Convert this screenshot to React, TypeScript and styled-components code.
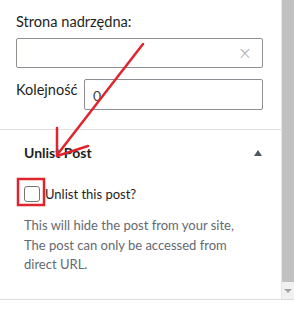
import React from "react";
import styled, { createGlobalStyle } from "styled-components";

const Global = createGlobalStyle`
  html, body { margin: 0; padding: 0; background: #fff; }
  body { font-family: Lato, "Noto Sans", sans-serif; }
`;

const Frame = styled.div`
  position: relative;
  width: 294px;
  height: 299px;
  display: flex;
  border-bottom: 1px solid #dcdcde;
  overflow: hidden;
`;

const Panel = styled.div`
  width: 281px;
  border-right: 1px solid #e6e6e6;
  display: flex;
  flex-direction: column;
  color: #1e1e1e;
  font-size: 14px;
`;

const TopSection = styled.div`
  padding: 12px 18px 19px 16px;
  border-bottom: 1px solid #e0e0e0;
  display: flex;
  flex-direction: column;
`;

const Label = styled.div`
  line-height: 20px;
  margin-bottom: 6px;
  font-size: 14.6px;
`;

const InputBox = styled.div<{ $h?: number; $grow?: boolean }>`
  position: relative;
  height: ${(p) => p.$h ?? 30}px;
  box-sizing: border-box;
  border: 1px solid #8c8f94;
  border-radius: 2px;
  background: #fff;
  display: flex;
  align-items: center;
  padding: 0 8px;
  flex: ${(p) => (p.$grow ? "1" : "none")};
`;

const ClearX = styled.span`
  margin-left: auto;
  color: #a7aaad;
  font-size: 17px;
  line-height: 1;
  margin-right: 2px;
  font-family: "DejaVu Sans", sans-serif;
  font-weight: 300;
`;

const Row = styled.div`
  display: flex;
  align-items: center;
  margin-top: 11px;
`;

const RowLabel = styled.span`
  width: 68px;
  line-height: 20px;
  margin-top: -9px;
  font-size: 14.5px;
`;

const Value = styled.span`
  color: #3c434a;
  font-size: 14px;
  margin-top: 1px;
`;

const Section = styled.div`
  display: flex;
  flex-direction: column;
`;

const Header = styled.div`
  height: 44px;
  padding: 0 19px 0 24px;
  display: flex;
  align-items: center;
  justify-content: space-between;
  font-weight: 700;
  font-size: 14px;
`;

const Caret = styled.span`
  width: 0;
  height: 0;
  border-left: 4px solid transparent;
  border-right: 4px solid transparent;
  border-bottom: 6px solid #50575e;
  margin-top: 1px;
`;

const CheckRow = styled.label`
  display: flex;
  align-items: center;
  padding: 10px 24px 0 24px;
  gap: 5px;
  line-height: 20px;
  font-size: 13px;
`;

const Check = styled.span`
  width: 16px;
  height: 16px;
  box-sizing: border-box;
  border: 1px solid #757575;
  border-radius: 3px;
  background: #fff;
  flex: none;
`;

const Help = styled.p`
  margin: 12px 0 0 0;
  padding: 0 24px;
  color: #646970;
  line-height: 19.5px;
  font-size: 13px;
`;

const Scrollbar = styled.div`
  width: 12px;
  display: flex;
  flex-direction: column;
  background: #f1f1f1;
`;

const Thumb = styled.div`
  height: 282px;
  background: #c1c1c1;
`;

const ArrowBtn = styled.div`
  flex: 1;
  display: flex;
  align-items: center;
  justify-content: center;
`;

const DownTri = styled.span`
  width: 0;
  height: 0;
  border-left: 4px solid transparent;
  border-right: 4px solid transparent;
  border-top: 4px solid #a3a3a3;
`;

const Overlay = styled.svg`
  position: absolute;
  left: 0;
  top: 0;
  pointer-events: none;
`;

export default function App() {
  return (
    <>
      <Global />
      <Frame>
        <Panel>
          <TopSection>
            <Label>Strona nadrzędna:</Label>
            <InputBox>
              <ClearX>×</ClearX>
            </InputBox>
            <Row>
              <RowLabel>Kolejność</RowLabel>
              <InputBox $h={31} $grow>
                <Value>0</Value>
              </InputBox>
            </Row>
          </TopSection>
          <Section>
            <Header>
              <span>Unlist Post</span>
              <Caret />
            </Header>
            <CheckRow>
              <Check />
              <span>Unlist this post?</span>
            </CheckRow>
            <Help>
              This will hide the post from your site, The post can only be
              accessed from direct URL.
            </Help>
          </Section>
        </Panel>
        <Scrollbar>
          <Thumb />
          <ArrowBtn>
            <DownTri />
          </ArrowBtn>
        </Scrollbar>
        <Overlay width="294" height="299" viewBox="0 0 294 299">
          <g stroke="#e0242b" strokeWidth="2.5" fill="none" strokeLinecap="round">
            <line x1="143" y1="44" x2="57" y2="155" />
            <line x1="57" y1="128" x2="57" y2="156" />
            <line x1="57" y1="156" x2="88" y2="146" />
          </g>
          <rect x="18" y="179" width="26" height="26" fill="none" stroke="#e0242b" strokeWidth="2.5" />
        </Overlay>
      </Frame>
    </>
  );
}
